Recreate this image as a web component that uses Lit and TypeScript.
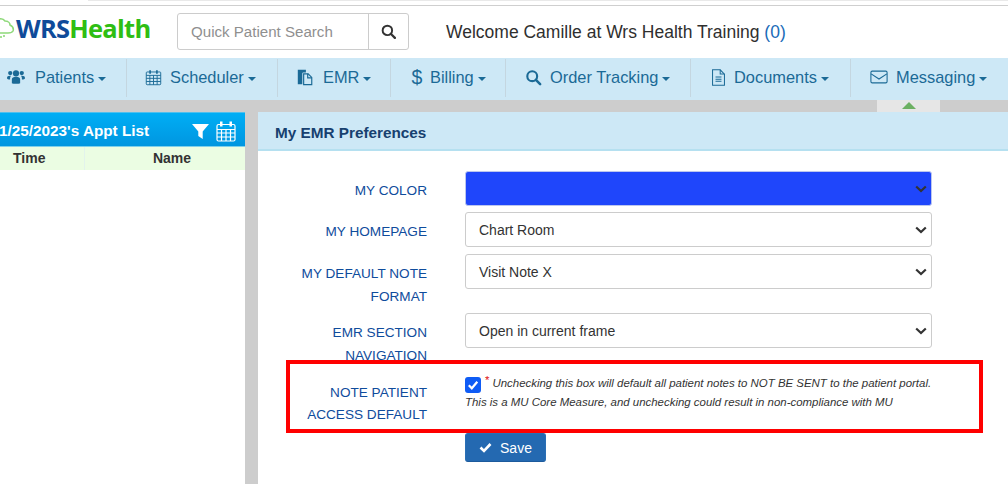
import { LitElement, html, css, svg } from "lit";
import { customElement } from "lit/decorators.js";

const caret = html`<span class="caret"></span>`;
const ico = (w: number, body: unknown, vb = "0 0 20 20") =>
  html`<svg class="ico" width=${w} height=${w} viewBox=${vb}>${body}</svg>`;

const icons = {
  users: svg`<g fill="#1b6a96"><circle cx="10" cy="6" r="3.4"/><circle cx="3.6" cy="5.6" r="2.4"/><circle cx="16.4" cy="5.6" r="2.4"/><path d="M5.4 17v-4.400c0-2 1.600-3 4.600-3s4.600 1 4.600 3V17c-1.200.8-8 .8-9.200 0z"/><path d="M4.400 9c-.8.700-1 2-1 3.800C1.600 12.800 0 12.300 0 11.400 0 9.600 1.200 8.700 3.400 8.700c.4 0 .7.100 1 .3zM15.600 9c.8.700 1 2 1 3.800 1.800 0 3.400-.5 3.400-1.400 0-1.800-1.200-2.700-3.400-2.700-.4 0-.7.100-1 .3z"/></g>`,
  cal: svg`<g fill="none" stroke="#1b6a96" stroke-width="1.100"><rect x="1.500" y="3.500" width="17" height="15" rx="1"/><path d="M1.500 7.500h17M1.500 11h17M1.500 14.700h17M5.700 7.500v11M10 7.500v11M14.300 7.500v11"/></g><path d="M5 1.500h2v4H5zM13 1.500h2v4h-2z" fill="#1b6a96"/>`,
  emr: svg`<path d="M2 2h9v3H8a1 1 0 0 0-1 1v12H2z" fill="#1b6a96"/><path d="M8.500 6.500h5l4 4v8h-9z" fill="none" stroke="#1b6a96" stroke-width="1.300"/><path d="M13 6.500V11h4.500" fill="none" stroke="#1b6a96" stroke-width="1.300"/>`,
  search: svg`<circle cx="8.500" cy="8.500" r="5.800" fill="none" stroke="#1b6a96" stroke-width="2.500"/><path d="M12.800 12.800l5 5" stroke="#1b6a96" stroke-width="3" stroke-linecap="round"/>`,
  doc: svg`<path d="M3 1h9l5 5v13H3z" fill="none" stroke="#1b6a96" stroke-width="1.200"/><path d="M12 1v5h5M6.500 9.500h7M6.500 12h7M6.500 14.500h7" fill="none" stroke="#1b6a96" stroke-width="1.200"/>`,
  mail: svg`<rect x="1" y="3.500" width="18" height="13" rx="1.500" fill="none" stroke="#1b6a96" stroke-width="1.200"/><path d="M1.300 6.500L10 12.200l8.700-5.700" fill="none" stroke="#1b6a96" stroke-width="1.200"/>`,
};

const navItems = [
  { label: "Patients", w: 127, icon: ico(18, icons.users), gap: 10, pad: 7 },
  { label: "Scheduler", w: 151, icon: ico(17, icons.cal), gap: 8, pad: 18 },
  { label: "EMR", w: 113, icon: ico(18, icons.emr), gap: 9, pad: 18 },
  { label: "Billing", w: 115, icon: html`<span class="dollar">$</span>`, gap: 7, pad: 20 },
  { label: "Order Tracking", w: 185, icon: ico(17, icons.search), gap: 8, pad: 19 },
  { label: "Documents", w: 160, icon: ico(17, icons.doc), gap: 7, pad: 19 },
  { label: "Messaging", w: 157, icon: ico(18, icons.mail), gap: 8, pad: 19, last: true },
];

const rows = [
  { label: ["MY COLOR"], value: "", blue: true, cls: "" },
  { label: ["MY HOMEPAGE"], value: "Chart Room", cls: "second" },
  { label: ["MY DEFAULT NOTE", "FORMAT"], value: "Visit Note X", cls: "tall" },
  { label: ["EMR SECTION", "NAVIGATION"], value: "Open in current frame", cls: "mid" },
];

@customElement("app-root")
export class AppRoot extends LitElement {
  static styles = css`
    :host {
      display: block;
      width: 1008px;
      height: 484px;
      overflow: hidden;
      background: #fff;
      font-family: "Liberation Sans", Arial, sans-serif;
      color: #333;
    }
    .chrome {
      height: 6px;
      box-sizing: border-box;
      border-bottom: 1px solid #cfcfcf;
      background: linear-gradient(#e9e9e9, #e9e9e9) 88px 0 / 100% 1px no-repeat #fff;
    }
    .top {
      height: 52px;
      display: flex;
      align-items: center;
    }
    .logo {
      width: 177px;
      flex: none;
      display: flex;
      align-items: center;
      height: 44px;
      padding-bottom: 8px;
      box-sizing: border-box;
      font-family: "Open Sans", sans-serif;
      font-size: 25.5px;
      font-weight: 700;
      letter-spacing: -0.75px;
    }
    .cloud { flex: none; margin-right: 1px; }
    .logo .w { color: #0f4b9a; }
    .logo .h { color: #2fbe13; }
    .search {
      display: flex;
      width: 232px;
      height: 37px;
      margin-top: -1px;
      box-sizing: border-box;
      border: 1px solid #ccc;
      border-radius: 3px;
      flex: none;
    }
    .search .input {
      width: 191px;
      border-right: 1px solid #ccc;
      padding-left: 13px;
      box-sizing: border-box;
      display: flex;
      align-items: center;
      color: #8f8f8f;
      font-size: 15.1px;
    }
    .search .btn { flex: 1; display: flex; align-items: center; justify-content: center; }
    .welcome { margin-left: 37px; font-size: 17.5px; color: #2f2f2f; }
    .welcome a { color: #1a6bb8; }
    nav {
      height: 42px;
      padding-top: 1px;
      box-sizing: border-box;
      background: #cde8f6;
      display: flex;
      align-items: flex-start;
    }
    .item {
      display: flex;
      align-items: center;
      box-sizing: border-box;
      height: 38px;
      padding-bottom: 2px;
      border-right: 1px solid #c4d6e0;
      color: #1b6a96;
      font-size: 16.4px;
      flex: none;
    }
    .item.last { border-right: 0; }
    .ico { flex: none; display: block; }
    .dollar { font-size: 19.5px; width: 12px; text-align: center; }
    .caret {
      display: inline-block;
      width: 0;
      height: 0;
      margin-left: 4px;
      margin-top: 4px;
      border-left: 4.500px solid transparent;
      border-right: 4.500px solid transparent;
      border-top: 4.500px solid #1b6a96;
    }
    .band {
      height: 12px;
      background: #cdcdcd;
      display: flex;
      justify-content: flex-end;
      padding-right: 68px;
    }
    .tab {
      width: 63px;
      background: #e6e6e6;
      display: flex;
      justify-content: center;
      align-items: flex-start;
      padding-top: 2px;
      box-sizing: border-box;
    }
    .tab i {
      width: 0;
      height: 0;
      border-left: 7px solid transparent;
      border-right: 7px solid transparent;
      border-bottom: 7px solid #6cb062;
    }
    .body { display: flex; height: 372px; }
    aside { width: 245px; flex: none; overflow: hidden; }
    .ahead {
      height: 35px;
      padding-top: 3px;
      box-sizing: border-box;
      border-top: 1px solid #4fc0ee;
      border-bottom: 1px solid #7fd0ea;
      background: linear-gradient(#00aef5, #0096e0);
      color: #fff;
      font-size: 15.3px;
      font-weight: 700;
      display: flex;
      align-items: center;
      white-space: nowrap;
    }
    .ahead .t { margin-left: -1px; width: 193px; flex: none; }
    .ahead svg { flex: none; display: block; }
    .cols {
      height: 23px;
      background: #ebfde3;
      display: flex;
      font-size: 14px;
      font-weight: 700;
      color: #333;
      line-height: 23px;
    }
    .cols .time { width: 85px; box-sizing: border-box; border-right: 1px solid #e2f3ec; padding-left: 13px; }
    .cols .name { flex: 1; text-align: center; padding-left: 14px; }
    .gutter { width: 13px; flex: none; background: #cdcdcd; }
    main { flex: 1; min-width: 0; }
    .mhead {
      height: 39px;
      padding-top: 4px;
      box-sizing: border-box;
      background: #cde8f6;
      border-bottom: 2px solid #b5e0f0;
      color: #17406f;
      font-weight: 700;
      font-size: 15.3px;
      display: flex;
      align-items: center;
      padding-left: 17px;
    }
    .form { position: relative; padding-top: 20px; }
    .row { display: flex; align-items: flex-start; margin-bottom: 6px; }
    .row.second { margin-bottom: 7px; }
    .row.tall { height: 59px; margin-bottom: 0; }
    .row.mid { height: 64px; margin-bottom: 0; }
    .lab {
      width: 169px;
      flex: none;
      text-align: right;
      color: #0f4c9c;
      font-size: 13.6px;
      line-height: 23px;
      padding-top: 8px;
    }
    .sel {
      margin-left: 38px;
      width: 467px;
      height: 35px;
      box-sizing: border-box;
      border: 1px solid #ccc;
      border-width: 1px 1.500px 1.500px 1px;
      border-radius: 3px;
      display: flex;
      align-items: center;
      justify-content: space-between;
      padding: 0 4px 0 13px;
      font-size: 14px;
      color: #333;
      background: #fff;
    }
    .sel.blue { background: #1f46fb; border-color: #bcc6ee; }
    .note { display: flex; height: 56px; }
    .note .lab { padding-top: 5px; line-height: 22px; }
    .ntext {
      margin-left: 38px;
      font-size: 11.45px;
      font-style: italic;
      color: #333;
      line-height: 19px;
      white-space: nowrap;
    }
    .ntext .first { display: flex; align-items: flex-start; line-height: 12px; }
    .check {
      width: 16px;
      height: 16px;
      background: #0f5cf5;
      border-radius: 3px;
      margin-right: 4px;
      flex: none;
      display: flex;
      align-items: center;
      justify-content: center;
    }
    .star { color: #e01010; margin: -3px 3px 0 0; font-style: normal; line-height: 12px; font-size: 11.4px; }
    .save {
      margin: 0 0 0 207px;
      width: 81px;
      height: 29px;
      box-sizing: border-box;
      background: #2469b1;
      border: 1px solid #2a6fb5;
      border-bottom-color: #1c5a9c;
      border-radius: 3px;
      color: #fff;
      font-size: 14px;
      display: flex;
      align-items: center;
      justify-content: center;
      gap: 8px;
    }
    .redbox {
      position: absolute;
      left: 28px;
      top: 209px;
      width: 697px;
      height: 73px;
      box-sizing: border-box;
      border: 4px solid #ff0000;
    }
  `;

  render() {
    return html`
      <div class="chrome"></div>
      <div class="top">
        <div class="logo">
          <svg class="cloud" width="15" height="24" viewBox="0 0 15 24">
            <path d="M-4 5c3-3 7-3 9 0 3 0 5 2 5 4 2 1 4 3 3 6-1 2-3 2-5 2H1c-2 0-3 0-4-1" fill="none" stroke="#8fd97a" stroke-width="1.600"/>
            <path d="M1 20v2M4 19v2" stroke="#8fd97a" stroke-width="1.600"/>
          </svg>
          <span class="w">WRS</span><span class="h">Health</span>
        </div>
        <div class="search">
          <div class="input">Quick Patient Search</div>
          <div class="btn">
            <svg width="15" height="15" viewBox="0 0 20 20">
              <circle cx="8.500" cy="8.500" r="6.300" fill="none" stroke="#333" stroke-width="2.600"/>
              <path d="M13 13l5.500 5.500" stroke="#333" stroke-width="3" stroke-linecap="round"/>
            </svg>
          </div>
        </div>
        <div class="welcome">Welcome Camille at Wrs Health Training <a>(0)</a></div>
      </div>
      <nav>
        ${navItems.map(
          (n) => html`<div
            class="item ${n.last ? "last" : ""}"
            style="width:${n.w}px;padding-left:${n.pad}px"
          >
            ${n.icon}<span style="margin-left:${n.gap}px">${n.label}</span>${caret}
          </div>`,
        )}
      </nav>
      <div class="band"><div class="tab"><i></i></div></div>
      <div class="body">
        <aside>
          <div class="ahead">
            <span class="t">1/25/2023's Appt List</span>
            <svg width="17" height="17" viewBox="0 0 17 17"><path d="M0 1h17l-6.300 7.500V16l-4.400-3V8.500z" fill="#fff"/></svg>
            <svg style="margin-left:7px" width="20" height="21" viewBox="0 0 20 21">
              <g fill="none" stroke="#fff" stroke-width="1.200">
                <rect x="1" y="3.500" width="18" height="16.500" rx="1.500"/>
                <path d="M1 8.500h18M1 12h18M1 16h18M5.500 8.500V20M10 8.500V20M14.500 8.500V20"/>
              </g>
              <path d="M4 .5h2.500v5H4zM13.500 .5H16v5h-2.500z" fill="#fff"/>
            </svg>
          </div>
          <div class="cols"><div class="time">Time</div><div class="name">Name</div></div>
        </aside>
        <div class="gutter"></div>
        <main>
          <div class="mhead">My EMR Preferences</div>
          <div class="form">
            ${rows.map(
              (r) => html`<div class="row ${r.cls}">
                <div class="lab">${r.label.map((l) => html`${l}<br />`)}</div>
                <div class="sel ${r.blue ? "blue" : ""}">
                  <span>${r.value}</span>
                  <svg width="12" height="8" viewBox="0 0 12 8"><path d="M1.200 1.500L6 6l4.800-4.500" fill="none" stroke="#333" stroke-width="2.200"/></svg>
                </div>
              </div>`,
            )}
            <div class="note">
              <div class="lab">NOTE PATIENT<br />ACCESS DEFAULT</div>
              <div class="ntext">
                <div class="first">
                  <span class="check">
                    <svg width="12" height="12" viewBox="0 0 12 12"><path d="M1.800 6.200L4.800 9.300 10.300 2.700" fill="none" stroke="#fff" stroke-width="2.200"/></svg>
                  </span>
                  <span class="star">*</span>
                  <span>Unchecking this box will default all patient notes to NOT BE SENT to the patient portal.</span>
                </div>
                <div>This is a MU Core Measure, and unchecking could result in non-compliance with MU</div>
              </div>
            </div>
            <div class="save">
              <svg width="13" height="11" viewBox="0 0 13 11"><path d="M1.500 5.500L5 9l6.500-7" fill="none" stroke="#fff" stroke-width="2.600"/></svg>
              <span>Save</span>
            </div>
            <div class="redbox"></div>
          </div>
        </main>
      </div>
    `;
  }
}
